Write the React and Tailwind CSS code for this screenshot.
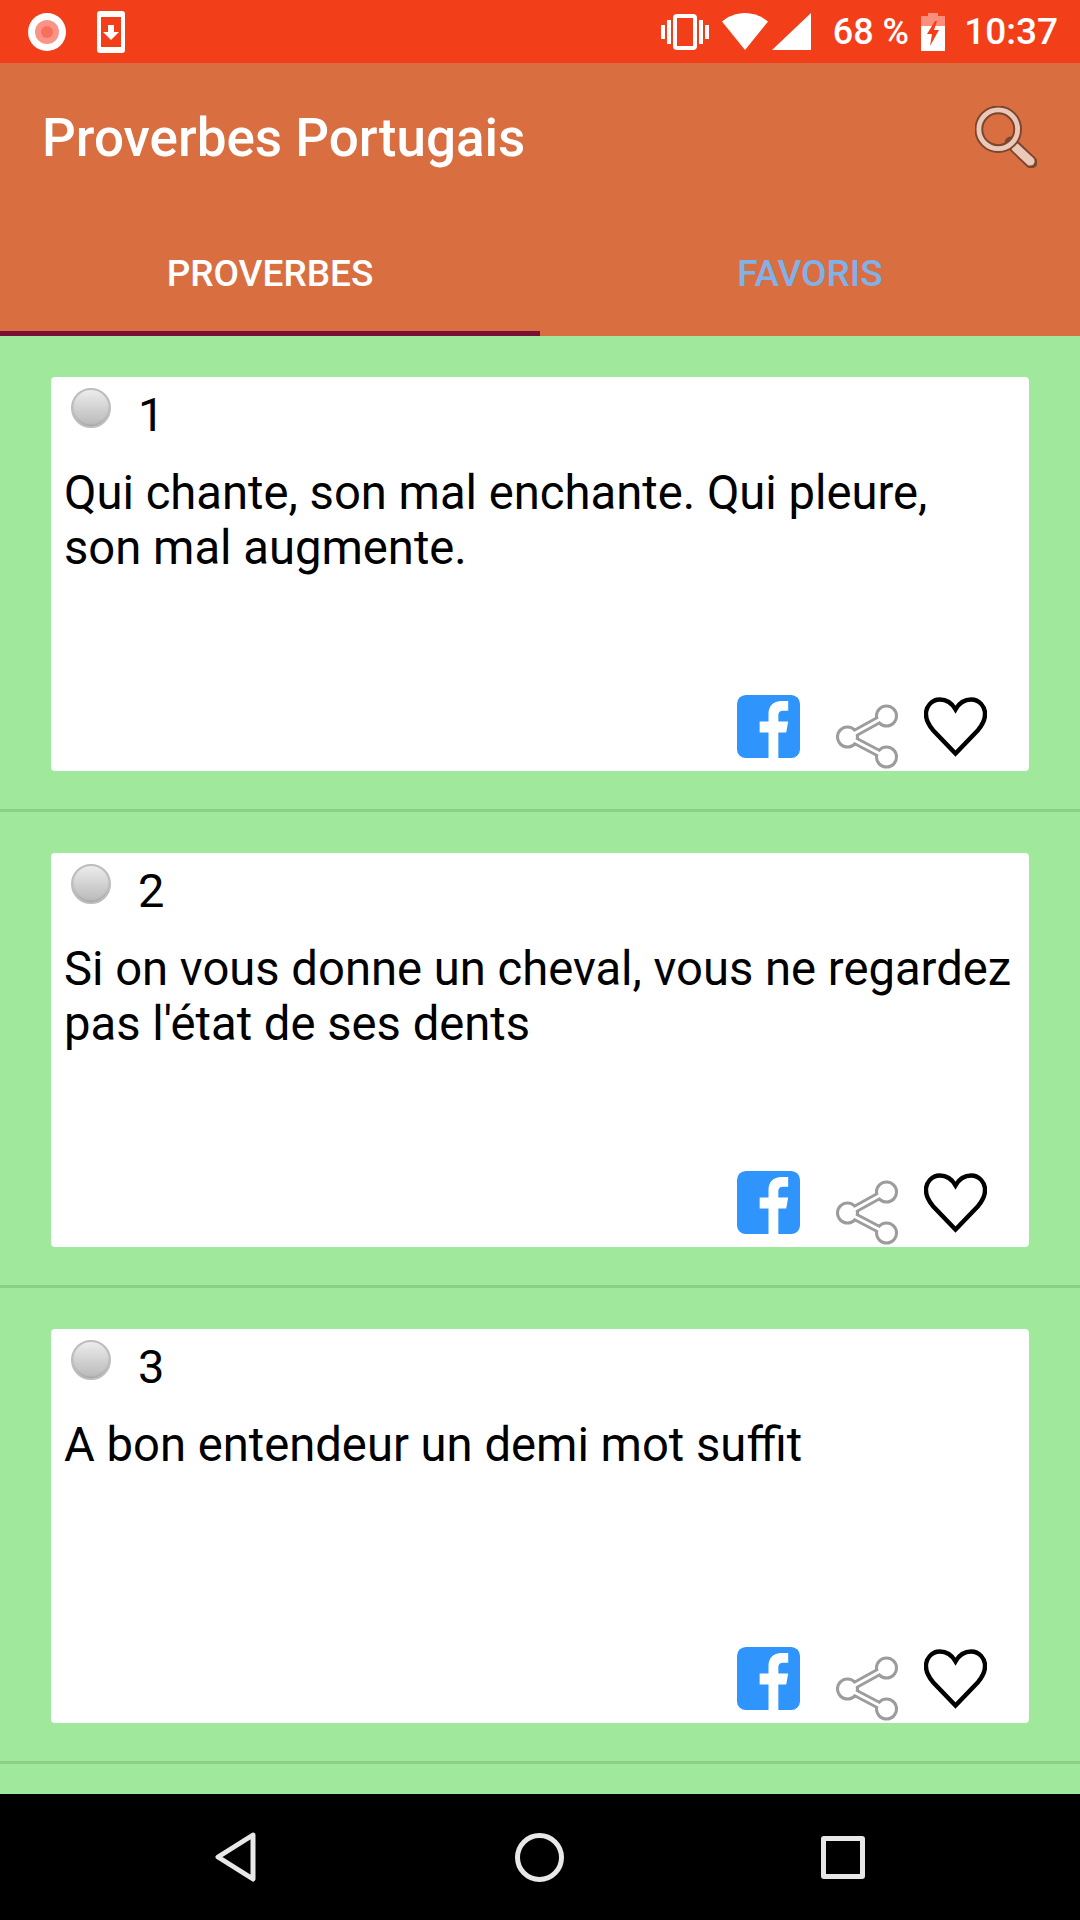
import React from 'react';

const proverbs = [
  { id: 1, text: 'Qui chante, son mal enchante. Qui pleure, son mal augmente.' },
  { id: 2, text: "Si on vous donne un cheval, vous ne regardez pas l'état de ses dents" },
  { id: 3, text: 'A bon entendeur un demi mot suffit' },
];

const RecordIcon = () => (
  <svg width="38" height="38" viewBox="0 0 38 38">
    <circle cx="19" cy="19" r="19" fill="#fff" />
    <circle cx="19" cy="19" r="12" fill="#fb9486" />
    <circle cx="19" cy="19" r="6" fill="#f7705c" />
  </svg>
);

const DownloadIcon = () => (
  <svg width="28" height="42" viewBox="0 0 28 42">
    <rect width="28" height="42" rx="3" fill="#fff" />
    <rect x="4" y="6" width="20" height="30" fill="#f33e1a" />
    <path d="M11 14h6v7h5l-8 8-8-8h5z" fill="#fff" />
  </svg>
);

const VibrateIcon = () => (
  <svg width="48" height="36" viewBox="0 0 48 36" fill="#fff">
    <rect x="0" y="11" width="4" height="14" />
    <rect x="6" y="6" width="4" height="24" />
    <rect x="38" y="6" width="4" height="24" />
    <rect x="44" y="11" width="4" height="14" />
    <rect x="14" y="2" width="20" height="32" rx="2" fill="none" stroke="#fff" strokeWidth="4" />
  </svg>
);

const WifiIcon = () => (
  <svg width="46" height="37" viewBox="0 0 46 37">
    <path d="M0 8.5C6 3.5 14 0 23 0s17 3.5 23 8.5L23 37z" fill="#fff" />
  </svg>
);

const SignalIcon = () => (
  <svg width="39" height="37" viewBox="0 0 39 37">
    <path d="M39 0v37H0z" fill="#fff" />
  </svg>
);

const BatteryIcon = () => (
  <svg width="24" height="38" viewBox="0 0 24 38">
    <path d="M7 0h10v3h7v35H0V3h7z" fill="#fb8f7c" />
    <path d="M0 13h24v25H0z" fill="#fff" />
    <path d="M14 8L6 21h5l-2 12 9-16h-5l3-9z" fill="#f33e1a" />
  </svg>
);

const SearchIcon = () => (
  <svg width="62" height="62" viewBox="0 0 64 64">
    <path d="M37 38l21 20" stroke="#7a4630" strokeWidth="13" strokeLinecap="round" />
    <path d="M42 43l15 14" stroke="#ecc8b8" strokeWidth="9" strokeLinecap="round" />
    <circle cx="24" cy="24" r="20" fill="none" stroke="#7a4630" strokeWidth="9" />
    <circle cx="24" cy="24" r="20" fill="none" stroke="#ecc8b8" strokeWidth="5" />
  </svg>
);

const FacebookIcon = () => (
  <svg width="63" height="63" viewBox="0 0 64 64">
    <rect width="64" height="64" rx="9" fill="#2f94fb" />
    <path d="M32 64V38h-9V27h9v-8c0-8 5-13 13-13h7v10h-5c-3 0-5 1-5 5v6h10l-2 11h-8v26z" fill="#fff" />
  </svg>
);

// outlined arms: grey shapes first, then a white pass on top so the joins stay open
const ShareIcon = () => (
  <svg width="62" height="65" viewBox="0 0 62 65" strokeLinecap="round">
    <g stroke="#9c9c9c" fill="#9c9c9c">
      <path d="M12 33L50 12M12 33l38 20" strokeWidth="8.5" fill="none" />
      <circle cx="11.5" cy="33" r="11.5" stroke="none" />
      <circle cx="50.5" cy="12" r="11.5" stroke="none" />
      <circle cx="50.5" cy="53" r="11.5" stroke="none" />
    </g>
    <g fill="#fff" stroke="#fff">
      <circle cx="11.5" cy="33" r="8.5" stroke="none" />
      <circle cx="50.5" cy="12" r="8.5" stroke="none" />
      <circle cx="50.5" cy="53" r="8.5" stroke="none" />
      <path d="M12 33L50 12M12 33l38 20" strokeWidth="3" fill="none" />
    </g>
  </svg>
);

const HeartIcon = () => (
  <svg width="63" height="60" viewBox="0 0 64 60">
    <path
      d="M32 12C28 5 22 2 16 2 8 2 2 9 2 17c0 6 3 11 7 16l23 24 23-24c4-5 7-10 7-16 0-8-6-15-14-15-6 0-12 3-16 10z"
      fill="none"
      stroke="#000"
      strokeWidth="4.5"
      strokeLinejoin="miter"
    />
  </svg>
);

const RadioDot = () => (
  <div className="w-[40px] h-[40px] rounded-full border-[2px] border-[#bdbdbd] bg-gradient-to-b from-[#ececec] to-[#b9b9b9] shadow-[inset_0_-1px_2px_rgba(0,0,0,0.15)]" />
);

const ProverbCard = ({ id, text }) => (
  <div className="pt-[41px] pb-[38px] border-b-[3px] border-[#8ecf86]">
    <div className="mx-[51px] h-[394px] bg-white rounded-[4px] flex flex-col">
      <div className="flex items-start pt-[11px] pl-[20px]">
        <RadioDot />
        <span className="ml-[27px] mt-[2px] text-[47px] leading-[50px] text-black">{id}</span>
      </div>
      <p className="mt-[26px] px-[13px] text-[47.2px] leading-[55px] text-black">{text}</p>
      <div className="mt-auto flex items-start pl-[686px] pt-[3px] h-[79px]">
        <FacebookIcon />
        <div className="ml-[36px] mt-[9px]"><ShareIcon /></div>
        <div className="ml-[26px] mt-[2px]"><HeartIcon /></div>
      </div>
    </div>
  </div>
);

export default function App() {
  return (
    <div className="w-[1080px] h-[1920px] flex flex-col overflow-hidden bg-[#a0e89c] font-['Roboto',sans-serif]">
      {/* status bar */}
      <div className="h-[63px] shrink-0 bg-[#f33e1a] flex items-center pl-[28px] pr-[22px] text-white">
        <RecordIcon />
        <div className="ml-[31px]"><DownloadIcon /></div>
        <div className="ml-auto flex items-center">
          <VibrateIcon />
          <div className="ml-[13px]"><WifiIcon /></div>
          <div className="ml-[4px]"><SignalIcon /></div>
          <span className="ml-[22px] text-[36px] leading-none font-medium">68 %</span>
          <div className="ml-[12px]"><BatteryIcon /></div>
          <span className="ml-[19px] text-[37px] leading-none font-medium">10:37</span>
        </div>
      </div>

      {/* app bar */}
      <div className="h-[273px] shrink-0 bg-[#d96e41] flex flex-col">
        <div className="h-[151px] flex items-center justify-between pl-[42px] pr-[43px]">
          <h1 className="text-[53px] font-medium text-white leading-none">Proverbes Portugais</h1>
          <div className="mb-[4px]"><SearchIcon /></div>
        </div>
        <div className="flex-1 flex">
          <div className="w-1/2 flex items-center justify-center pt-[2px] border-b-[5px] border-[#7a0f35] text-[37px] font-medium text-white">
            PROVERBES
          </div>
          <div className="w-1/2 flex items-center justify-center pt-[2px] pb-[5px] text-[37px] font-medium text-[#82b1e8]">
            FAVORIS
          </div>
        </div>
      </div>

      {/* proverb list */}
      <div className="flex-1 overflow-hidden">
        {proverbs.map((p) => (
          <ProverbCard key={p.id} id={p.id} text={p.text} />
        ))}
      </div>

      {/* navigation bar */}
      <div className="h-[126px] shrink-0 bg-black flex items-center pl-[215px]">
        <svg width="41" height="50" viewBox="0 0 41 50">
          <path d="M38 3L3 25l35 22z" fill="none" stroke="#e8e8e8" strokeWidth="5" strokeLinejoin="round" />
        </svg>
        <svg width="49" height="49" viewBox="0 0 49 49" className="ml-[259px]">
          <circle cx="24.5" cy="24.5" r="22" fill="none" stroke="#e8e8e8" strokeWidth="5" />
        </svg>
        <div className="ml-[257px] w-[44px] h-[43px] border-[5px] border-[#e8e8e8] rounded-[3px]" />
      </div>
    </div>
  );
}
